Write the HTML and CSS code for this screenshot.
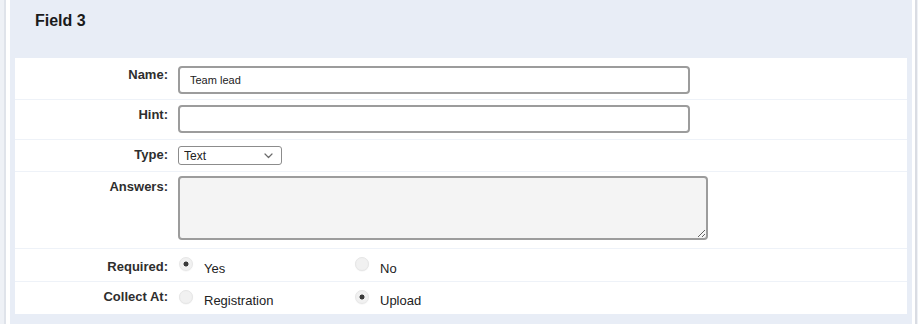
FILE: index.html
```html
<!DOCTYPE html>
<html>
<head>
<meta charset="utf-8">
<link rel="stylesheet" href="styles.css">
</head>
<body>
<div class="frame">
  <div class="panel">
    <div class="title">Field 3</div>
    <div class="table">
      <div class="row r-name">
        <label class="lbl">Name:</label>
        <div class="ctl"><input class="text" type="text" value="Team lead"></div>
      </div>
      <div class="row r-hint">
        <label class="lbl">Hint:</label>
        <div class="ctl"><input class="text" type="text" value=""></div>
      </div>
      <div class="row r-type">
        <label class="lbl">Type:</label>
        <div class="ctl">
          <div class="select-wrap">
            <select class="select"><option>Text</option></select>
            <svg class="chev" width="9" height="6" viewBox="0 0 9 6"><path d="M1 1 L4.5 4.5 L8 1" fill="none" stroke="#6b6b6b" stroke-width="1.2" stroke-linecap="round" stroke-linejoin="round"/></svg>
          </div>
        </div>
      </div>
      <div class="row r-answers">
        <label class="lbl">Answers:</label>
        <div class="ctl"><textarea class="area" readonly></textarea></div>
      </div>
      <div class="row r-req">
        <label class="lbl">Required:</label>
        <div class="ctl opts">
          <div class="opt"><input class="radio" type="radio" name="req" checked><span class="opt-text">Yes</span></div>
          <div class="opt"><input class="radio" type="radio" name="req"><span class="opt-text">No</span></div>
        </div>
      </div>
      <div class="row r-collect">
        <label class="lbl">Collect At:</label>
        <div class="ctl opts">
          <div class="opt"><input class="radio" type="radio" name="col"><span class="opt-text">Registration</span></div>
          <div class="opt"><input class="radio" type="radio" name="col" checked><span class="opt-text">Upload</span></div>
        </div>
      </div>
    </div>
  </div>
</div>
</body>
</html>
```
FILE: styles.css
```css
html, body {
  margin: 0;
  padding: 0;
}
body {
  background: #eef1f6;
  font-family: "Liberation Sans", Arial, sans-serif;
  height: 324px;
  overflow: hidden;
}
.frame {
  margin: 0 1px 0 4px;
  border-left: 2px solid #dfe3ea;
  border-right: 2px solid #d9dce3;
  background: #fff;
  padding: 0 3px 0 4px;
  height: 324px;
  box-sizing: border-box;
}
.panel {
  background: #e8edf6;
  padding: 0 5px 9px;
  height: 100%;
  box-sizing: border-box;
}
.title {
  height: 58px;
  box-sizing: border-box;
  padding: 11px 0 0 20px;
  font-size: 16px;
  line-height: 20px;
  font-weight: bold;
  color: #1a1a1a;
}
.table {
  background: #fff;
  padding-top: 2px;
}
.row {
  display: flex;
  align-items: flex-start;
  border-bottom: 1px solid #eef2f8;
}
.row:last-child {
  border-bottom: none;
}
.lbl {
  width: 153px;
  flex: none;
  text-align: right;
  font-size: 13px;
  line-height: 16px;
  font-weight: bold;
  color: #2e2e2e;
  padding-top: 7px;
}
.ctl {
  margin-left: 10px;
}
.text {
  display: block;
  box-sizing: border-box;
  width: 512px;
  height: 28px;
  border: 2px solid #9c9c9c;
  border-radius: 4px;
  padding: 0 0 0 10px;
  font-family: "Liberation Sans", Arial, sans-serif;
  font-size: 11px;
  color: #222;
  background: #fff;
  outline: none;
}
.r-name .text { margin: 6px 0 5px; }
.r-hint .text { margin: 5px 0 6px; }
.select-wrap {
  position: relative;
  width: 104px;
  margin: 6px 0 6px;
}
.select {
  display: block;
  appearance: none;
  -webkit-appearance: none;
  box-sizing: border-box;
  width: 104px;
  height: 19px;
  border: 1px solid #8c8c8c;
  border-radius: 3px;
  background: #fff;
  padding: 0 0 0 5px;
  font-family: "Liberation Sans", Arial, sans-serif;
  font-size: 12px;
  color: #222;
  outline: none;
}
.chev {
  position: absolute;
  right: 9px;
  top: 7px;
  pointer-events: none;
}
.area {
  display: block;
  box-sizing: border-box;
  width: 530px;
  height: 64px;
  margin: 4px 0 8px;
  border: 2px solid #9c9c9c;
  border-radius: 4px;
  background: #f4f4f4;
  outline: none;
}
.r-req .lbl { padding-top: 10px; }
.r-collect .lbl { padding-top: 7px; }
.opts {
  display: flex;
}
.opt {
  width: 176px;
  display: flex;
  align-items: flex-start;
}
.radio {
  appearance: none;
  -webkit-appearance: none;
  width: 14px;
  height: 14px;
  margin: 8px 11px 0 1px;
  border-radius: 50%;
  background: #f1f1f1;
  border: 1px solid #e6e6e6;
  box-shadow: 0 0.5px 1px rgba(0,0,0,0.06);
  box-sizing: border-box;
  position: relative;
  flex: none;
}
.radio:checked {
  background: radial-gradient(circle, #3a3a3a 0 2.2px, #f1f1f1 2.8px);
}
.opt-text {
  font-size: 13px;
  line-height: 16px;
  color: #222;
  padding-top: 12px;
  padding-bottom: 4px;
}
.r-collect .opt-text { padding-bottom: 5px; }
.r-collect .radio { margin-top: 8px; }
.r-collect .opt-text { padding-top: 11px; }
```
